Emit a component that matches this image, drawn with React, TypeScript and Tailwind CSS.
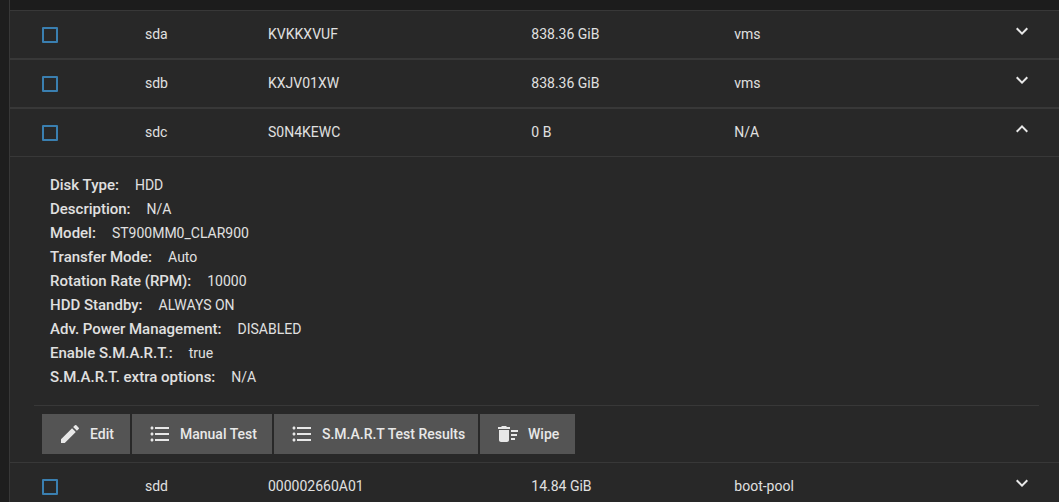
import { Fragment, useState } from "react";
import { MdDeleteSweep, MdEdit, MdExpandLess, MdExpandMore, MdFormatListBulleted } from "react-icons/md";

type Disk = {
  name:     string;
  serial:   string;
  size:     string;
  pool:     string;
  details?: { label: string; value: string }[];
};

const disks: Disk[] = [
  { name: "sda", serial: "KVKKXVUF", size: "838.36 GiB", pool: "vms" },
  { name: "sdb", serial: "KXJV01XW", size: "838.36 GiB", pool: "vms" },
  {
    name: "sdc",
    serial: "S0N4KEWC",
    size: "0 B",
    pool: "N/A",
    details: [
      { label: "Disk Type:",              value: "HDD" },
      { label: "Description:",            value: "N/A" },
      { label: "Model:",                  value: "ST900MM0_CLAR900" },
      { label: "Transfer Mode:",          value: "Auto" },
      { label: "Rotation Rate (RPM):",    value: "10000" },
      { label: "HDD Standby:",            value: "ALWAYS ON" },
      { label: "Adv. Power Management:",  value: "DISABLED" },
      { label: "Enable S.M.A.R.T.:",      value: "true" },
      { label: "S.M.A.R.T. extra options:", value: "N/A" },
    ],
  },
  { name: "sdd", serial: "000002660A01", size: "14.84 GiB", pool: "boot-pool" },
];

const actions = [
  { label: "Edit",                   icon: MdEdit,               width: "w-[88px]" },
  { label: "Manual Test",            icon: MdFormatListBulleted, width: "w-[140px]" },
  { label: "S.M.A.R.T Test Results", icon: MdFormatListBulleted, width: "w-[204px]" },
  { label: "Wipe",                   icon: MdDeleteSweep,        width: "w-[95px]" },
];

function DiskDetails({ details }: { details: { label: string; value: string }[] }) {
  return (
    <div className="pt-4">
      <dl className="px-10 pb-4">
        {details.map((item) => (
          <div key={item.label} className="flex items-center gap-4 leading-6">
            <dt className="text-[15px] font-medium">{item.label}</dt>
            <dd className="text-sm">{item.value}</dd>
          </div>
        ))}
      </dl>

      {/* Actions */}
      <div className="ml-6 mr-5 flex flex-wrap gap-0.5 border-t border-[#383838] p-2">
        {actions.map(({ label, icon: Icon, width }) => (
          <button
            key={label}
            className={`flex h-10 items-center gap-2 whitespace-nowrap bg-[#545454] pl-4 text-sm font-medium text-[#e8e8e8] hover:bg-[#606060] ${width}`}
          >
            <Icon className="size-6 shrink-0" aria-hidden="true" />
            {label}
          </button>
        ))}
      </div>
    </div>
  );
}

export default function App() {
  const [expanded, setExpanded] = useState<string | null>("sdc");

  return (
    <div className="h-screen overflow-hidden bg-[#1e1e1e] pl-[9px] font-['Roboto',sans-serif] text-[#e0e0e0]">
      <div className="min-h-full border-l border-[#383838] bg-[#1c1c1c] pt-2.5">
        <table className="w-full table-fixed border-separate border-spacing-0 bg-[#282828] text-left text-sm">
          <colgroup>
            <col className="w-[135px]" />
            <col className="w-[123px]" />
            <col className="w-[25.1%]" />
            <col className="w-[203px]" />
            <col />
            <col className="w-[49px]" />
          </colgroup>
          <tbody>
            {disks.map((disk) => {
              const open = expanded === disk.name;
              return (
                <Fragment key={disk.name}>
                  <tr className="h-[49px] *:border-y *:border-[#383838] *:px-0">
                    <td className="py-0">
                      <input
                        type="checkbox"
                        aria-label={`Select ${disk.name}`}
                        className="ml-8 block size-4 appearance-none rounded-[1px] border-2 border-[#3a7fb0] checked:bg-[#3a7fb0]"
                      />
                    </td>
                    <td className="pt-0 pb-0.5">{disk.name}</td>
                    <td className="pt-0 pb-0.5">{disk.serial}</td>
                    <td className="pt-0 pb-0.5">{disk.size}</td>
                    <td className="pt-0 pb-0.5">{disk.pool}</td>
                    <td className="pt-0 pb-2">
                      <button
                        aria-label={open ? "Collapse" : "Expand"}
                        aria-expanded={open}
                        onClick={() => setExpanded(open ? null : disk.name)}
                        className="block text-[#e8e8e8]"
                      >
                        {open ? <MdExpandLess className="size-6" /> : <MdExpandMore className="size-6" />}
                      </button>
                    </td>
                  </tr>
                  {open && disk.details && (
                    <tr>
                      <td colSpan={6} className="p-0">
                        <DiskDetails details={disk.details} />
                      </td>
                    </tr>
                  )}
                </Fragment>
              );
            })}
          </tbody>
        </table>
      </div>
    </div>
  );
}
